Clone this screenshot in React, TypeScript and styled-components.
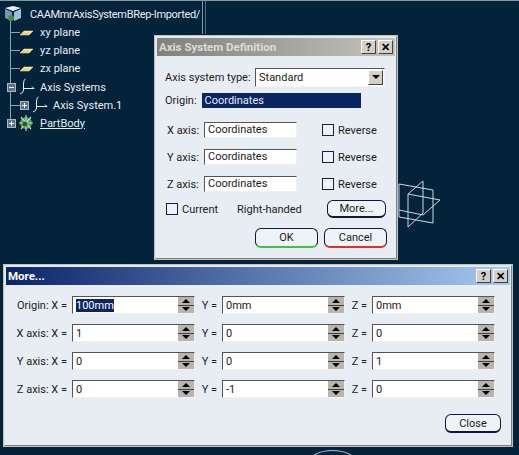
import React from "react";
import styled, { createGlobalStyle } from "styled-components";

const GlobalStyle = createGlobalStyle`
  html, body {
    margin: 0;
    padding: 0;
    background: #03233b;
    font-family: Roboto, "Noto Sans", sans-serif;
    font-size: 11px;
  }
`;

const Viewer = styled.div`
  position: relative;
  width: 519px;
  height: 455px;
  overflow: hidden;
  background: #03233b;
  border-top: 1px solid #8a949c;
  box-sizing: border-box;
`;

const Tree = styled.div`
  position: relative;
  display: flex;
  flex-direction: column;
  padding: 4px 0 0 4px;
  color: #e8eef2;
`;

const TreeRail = styled.div`
  position: absolute;
  left: 10px;
  top: 20px;
  width: 1px;
  height: 103px;
  background: #8ea2b0;
`;

const TreeRow = styled.div<{ $top?: number }>`
  position: relative;
  display: flex;
  align-items: center;
  height: 18px;
  margin-top: ${(p) => p.$top ?? 0}px;
  white-space: nowrap;
`;

const TreeIcon = styled.svg<{ $left?: number; $right?: number }>`
  flex: none;
  display: block;
  margin-left: ${(p) => p.$left ?? 0}px;
  margin-right: ${(p) => p.$right ?? 0}px;
`;

const Stub = styled.div<{ $left: number; $w: number }>`
  flex: none;
  height: 1px;
  margin-left: ${(p) => p.$left}px;
  width: ${(p) => p.$w}px;
  background: #8ea2b0;
`;

const TreeLabel = styled.span<{ $left: number; $underline?: boolean; $tight?: boolean }>`
  margin-left: ${(p) => p.$left}px;
  text-decoration: ${(p) => (p.$underline ? "underline" : "none")};
  letter-spacing: ${(p) => (p.$tight ? "-0.33px" : "normal")};
`;

const Window = styled.div<{ $x: number; $y: number; $w: number; $h: number }>`
  position: absolute;
  left: ${(p) => p.$x}px;
  top: ${(p) => p.$y}px;
  width: ${(p) => p.$w}px;
  height: ${(p) => p.$h}px;
  box-sizing: border-box;
  display: flex;
  flex-direction: column;
  background: #e7edf2;
  padding: 1px;
  border: 2px solid;
  border-color: #e4e3df #7f7d79 #7f7d79 #e4e3df;
  outline: 1px solid #c5c3bd;
  outline-offset: -1px;
`;

const TitleBar = styled.div<{ $active?: boolean }>`
  display: flex;
  align-items: center;
  justify-content: space-between;
  height: 18px;
  flex: none;
  padding: 0 2px;
  font-weight: 700;
  font-size: 11.5px;
  color: ${(p) => (p.$active ? "#ffffff" : "#dcdcd8")};
  background: ${(p) =>
    p.$active
      ? "linear-gradient(90deg, #0a246a 0%, #a6caf0 100%)"
      : "linear-gradient(90deg, #82807c 0%, #c4c2bc 100%)"};
`;

const TitleButtons = styled.div`
  display: flex;
  gap: 2px;
`;

const TitleButton = styled.div`
  width: 15px;
  height: 14px;
  box-sizing: border-box;
  display: flex;
  align-items: center;
  justify-content: center;
  background: #d4d0c8;
  border: 1px solid;
  border-color: #ffffff #404040 #404040 #ffffff;
  color: #000000;
  font-size: 11px;
  font-weight: 700;
  line-height: 1;
`;

const DefinitionBody = styled.div`
  display: flex;
  flex-direction: column;
  padding: 11px 8px 0 8px;
  color: #1c1c1c;
`;

const TypeRow = styled.div`
  display: flex;
  align-items: center;
  height: 20px;
  justify-content: space-between;
  padding-right: 2px;
`;

const OriginRow = styled.div`
  display: flex;
  align-items: center;
  gap: 5px;
  height: 16px;
  margin-top: 5px;
`;

const OriginValue = styled.div`
  width: 159px;
  height: 15px;
  box-sizing: border-box;
  padding-left: 3px;
  line-height: 15px;
  background: #0a2464;
  color: #e8ecf4;
`;

const Select = styled.div`
  width: 130px;
  height: 19px;
  box-sizing: border-box;
  display: flex;
  align-items: center;
  justify-content: space-between;
  padding: 0 1px 0 3px;
  background: #ffffff;
  border: 1px solid;
  border-color: #555555 #f4f4f4 #f4f4f4 #555555;
`;

const SelectArrow = styled.div`
  width: 15px;
  height: 15px;
  box-sizing: border-box;
  display: flex;
  align-items: center;
  justify-content: center;
  background: #d4d0c8;
  border: 1px solid;
  border-color: #ffffff #404040 #404040 #ffffff;

  &::after {
    content: "";
    border-left: 4px solid transparent;
    border-right: 4px solid transparent;
    border-top: 4px solid #000000;
  }
`;

const AxisRow = styled.div<{ $top: number }>`
  display: grid;
  grid-template-columns: 37px 93px 25px 1fr;
  align-items: center;
  height: 16px;
  margin-top: ${(p) => p.$top}px;
  padding-left: 2px;
`;

const TextField = styled.div`
  height: 16px;
  box-sizing: border-box;
  padding-left: 3px;
  line-height: 14px;
  background: #ffffff;
  border: 1px solid;
  border-color: #555555 #f0f0f0 #f0f0f0 #555555;
`;

const CheckLabel = styled.label`
  display: flex;
  align-items: center;
  gap: 4px;
`;

const CheckBox = styled.span`
  width: 12px;
  height: 12px;
  box-sizing: border-box;
  border: 1px solid #1b1b50;
  background: #eef2f5;
  display: block;
`;

const OptionsRow = styled.div`
  display: flex;
  align-items: center;
  height: 18px;
  margin-top: 8px;
  padding-left: 1px;
`;

const Handedness = styled.span`
  margin-left: 19px;
  margin-right: auto;
  white-space: nowrap;
`;

const PillButton = styled.button<{ $w: number; $h: number; $accent?: string }>`
  flex: none;
  width: ${(p) => p.$w}px;
  height: ${(p) => p.$h}px;
  box-sizing: border-box;
  padding: 0;
  background: #eef3f7;
  border: 1px solid #14143c;
  border-bottom: 2px solid ${(p) => p.$accent ?? "#14143c"};
  border-radius: 6px;
  font: inherit;
  color: #1c1c1c;
`;

const MoreSlot = styled.div`
  margin-right: 1px;
`;

const ButtonRow = styled.div<{ $top: number; $right: number }>`
  display: flex;
  justify-content: flex-end;
  gap: 6px;
  margin-top: ${(p) => p.$top}px;
  padding-right: ${(p) => p.$right}px;
`;

const MoreBody = styled.div`
  display: flex;
  flex-direction: column;
  gap: 10px;
  padding: 11px 0 0 0;
  color: #1c1c1c;
`;

const CoordRow = styled.div`
  display: grid;
  grid-template-columns: 66px 123px 27px 123px 27px 123px;
  align-items: center;
  height: 18px;
`;

const CoordLabel = styled.span`
  justify-self: end;
  padding-right: 5px;
  white-space: nowrap;
`;

const SpinField = styled.div`
  height: 18px;
  box-sizing: border-box;
  display: flex;
  align-items: center;
  justify-content: space-between;
  padding-left: 3px;
  background: #ffffff;
  border: 1px solid;
  border-color: #555555 #f0f0f0 #f0f0f0 #555555;
`;

const Selected = styled.span`
  background: #0a2464;
  color: #ffffff;
`;

const Spinner = styled.div`
  flex: none;
  width: 16px;
  height: 16px;
  display: flex;
  flex-direction: column;
  background: #404040;
  gap: 1px;
`;

const SpinPart = styled.div<{ $down?: boolean }>`
  flex: 1;
  display: flex;
  align-items: center;
  justify-content: center;
  background: #b8b5ae;

  &::after {
    content: "";
    border-left: 4px solid transparent;
    border-right: 4px solid transparent;
    border-${(p) => (p.$down ? "top" : "bottom")}: 4px solid #000000;
  }
`;

const Frame = styled.svg`
  position: absolute;
  left: 396px;
  top: 177px;
`;

const Globe = styled.div`
  position: absolute;
  left: 309px;
  top: 449px;
  width: 47px;
  height: 24px;
  box-sizing: border-box;
  border: 1px solid #a8c0d0;
  border-radius: 50%;
`;

const StemLines = styled.div`
  position: absolute;
  left: 202px;
  top: 0;
  width: 4px;
  height: 33px;
  box-sizing: border-box;
  border-left: 1px solid #7f97a8;
  border-right: 1px solid #4f6c80;
`;

const PlaneIcon = () => (
  <TreeIcon width="13" height="18" viewBox="0 0 13 18">
    <path d="M0 12L4 8H13L9 12Z" fill="#f3e3a0" stroke="#ffe98a" strokeWidth="0.5" />
    <path d="M1 11H7L9 9" fill="none" stroke="#b89f3a" strokeWidth="0.6" />
  </TreeIcon>
);

const PlaneRow = ({ label }: { label: string }) => (
  <TreeRow>
    <Stub $left={7} $w={9} />
    <PlaneIcon />
    <TreeLabel $left={7}>{label}</TreeLabel>
  </TreeRow>
);

const Expander = ({ open, left }: { open?: boolean; left: number }) => (
  <TreeIcon width="9" height="9" viewBox="0 0 9 9" $left={left} $right={2}>
    <rect x="0.5" y="0.5" width="8" height="8" fill="#5b7386" stroke="#a9b8c3" />
    <path d={open ? "M2 4.5H7" : "M2 4.5H7M4.5 2V7"} stroke="#ffffff" />
  </TreeIcon>
);

const AxisIcon = () => (
  <TreeIcon width="18" height="18" viewBox="0 0 18 18">
    <path d="M7.5 1Q5.5 1 5.5 6V12Q5.5 15 2 16" stroke="#e8eef2" fill="none" />
    <path d="M6 10.5H16L14 8.5" stroke="#e8eef2" fill="none" />
  </TreeIcon>
);

const ProductIcon = () => (
  <TreeIcon width="18" height="18" viewBox="0 0 18 18">
    <path d="M1 3L9 1L17 3L9 6Z" fill="#e8f0f4" />
    <path d="M1 4L8 7V16L1 13Z" fill="#6f97b8" />
    <path d="M10 7L17 4V13L10 16Z" fill="#9fc0da" />
    <circle cx="7" cy="13" r="3" fill="#4d8f3f" />
  </TreeIcon>
);

const BodyIcon = () => (
  <TreeIcon width="16" height="18" viewBox="0 0 16 18">
    <circle cx="8" cy="9" r="6" fill="#5f9c3c" />
    <path d="M8 1V17M1 9H15M3 3L13 15M13 3L3 15" stroke="#a8d8e0" strokeWidth="1.2" />
    <circle cx="7" cy="10" r="2.5" fill="#2e5f22" />
  </TreeIcon>
);

const WindowControls = () => (
  <TitleButtons>
    <TitleButton>?</TitleButton>
    <TitleButton>✕</TitleButton>
  </TitleButtons>
);

const AxisField = ({ label, top }: { label: string; top: number }) => (
  <AxisRow $top={top}>
    <span>{label}</span>
    <TextField>Coordinates</TextField>
    <span />
    <CheckLabel>
      <CheckBox />
      Reverse
    </CheckLabel>
  </AxisRow>
);

const Spin = ({ children }: { children: React.ReactNode }) => (
  <SpinField>
    <span>{children}</span>
    <Spinner>
      <SpinPart />
      <SpinPart $down />
    </Spinner>
  </SpinField>
);

const rows: { label: string; x: React.ReactNode; y: string; z: string }[] = [
  { label: "Origin: X =", x: <Selected>100mm</Selected>, y: "0mm", z: "0mm" },
  { label: "X axis: X =", x: "1", y: "0", z: "0" },
  { label: "Y axis: X =", x: "0", y: "0", z: "1" },
  { label: "Z axis: X =", x: "0", y: "-1", z: "0" },
];

const App = () => {
  return (
    <Viewer>
      <GlobalStyle />
      <Tree>
        <TreeRail />
        <TreeRow>
          <ProductIcon />
          <TreeLabel $left={8} $tight>
            CAAMmrAxisSystemBRep-Imported/
          </TreeLabel>
        </TreeRow>
        <PlaneRow label="xy plane" />
        <PlaneRow label="yz plane" />
        <PlaneRow label="zx plane" />
        <TreeRow $top={1}>
          <Expander open left={3} />
          <AxisIcon />
          <TreeLabel $left={4}>Axis Systems</TreeLabel>
        </TreeRow>
        <TreeRow>
          <Stub $left={7} $w={9} />
          <Expander left={0} />
          <AxisIcon />
          <TreeLabel $left={4}>Axis System.1</TreeLabel>
        </TreeRow>
        <TreeRow>
          <Expander left={3} />
          <BodyIcon />
          <TreeLabel $left={6} $underline>
            PartBody
          </TreeLabel>
        </TreeRow>
      </Tree>

      <StemLines />

      <Frame width="48" height="54" viewBox="0 0 48 54">
        <g stroke="#c9dbe6" fill="none" strokeWidth="1">
          <path d="M3 6L37 12V45L3 39Z" />
          <path d="M27 3V35L12 49V16Z" />
          <path d="M12 16L44 22L27 37L3 32" />
        </g>
      </Frame>

      <Globe />

      <Window $x={154} $y={34} $w={244} $h={225}>
        <TitleBar>
          Axis System Definition
          <WindowControls />
        </TitleBar>
        <DefinitionBody>
          <TypeRow>
            Axis system type:
            <Select>
              Standard
              <SelectArrow />
            </Select>
          </TypeRow>
          <OriginRow>
            Origin:
            <OriginValue>Coordinates</OriginValue>
          </OriginRow>
          <AxisField label="X axis:" top={14} />
          <AxisField label="Y axis:" top={11} />
          <AxisField label="Z axis:" top={11} />
          <OptionsRow>
            <CheckLabel>
              <CheckBox />
              Current
            </CheckLabel>
            <Handedness>Right-handed</Handedness>
            <MoreSlot>
              <PillButton $w={59} $h={18}>
                More...
              </PillButton>
            </MoreSlot>
          </OptionsRow>
          <ButtonRow $top={10} $right={0}>
            <PillButton $w={63} $h={20} $accent="#3fbf4f">
              OK
            </PillButton>
            <PillButton $w={63} $h={20} $accent="#d8303a">
              Cancel
            </PillButton>
          </ButtonRow>
        </DefinitionBody>
      </Window>

      <Window $x={3} $y={263} $w={510} $h={183}>
        <TitleBar $active>
          More...
          <WindowControls />
        </TitleBar>
        <MoreBody>
          {rows.map((row) => (
            <CoordRow key={row.label}>
              <CoordLabel>{row.label}</CoordLabel>
              <Spin>{row.x}</Spin>
              <CoordLabel>Y =</CoordLabel>
              <Spin>{row.y}</Spin>
              <CoordLabel>Z =</CoordLabel>
              <Spin>{row.z}</Spin>
            </CoordRow>
          ))}
        </MoreBody>
        <ButtonRow $top={16} $right={9}>
          <PillButton $w={56} $h={19}>
            Close
          </PillButton>
        </ButtonRow>
      </Window>
    </Viewer>
  );
};

export default App;
